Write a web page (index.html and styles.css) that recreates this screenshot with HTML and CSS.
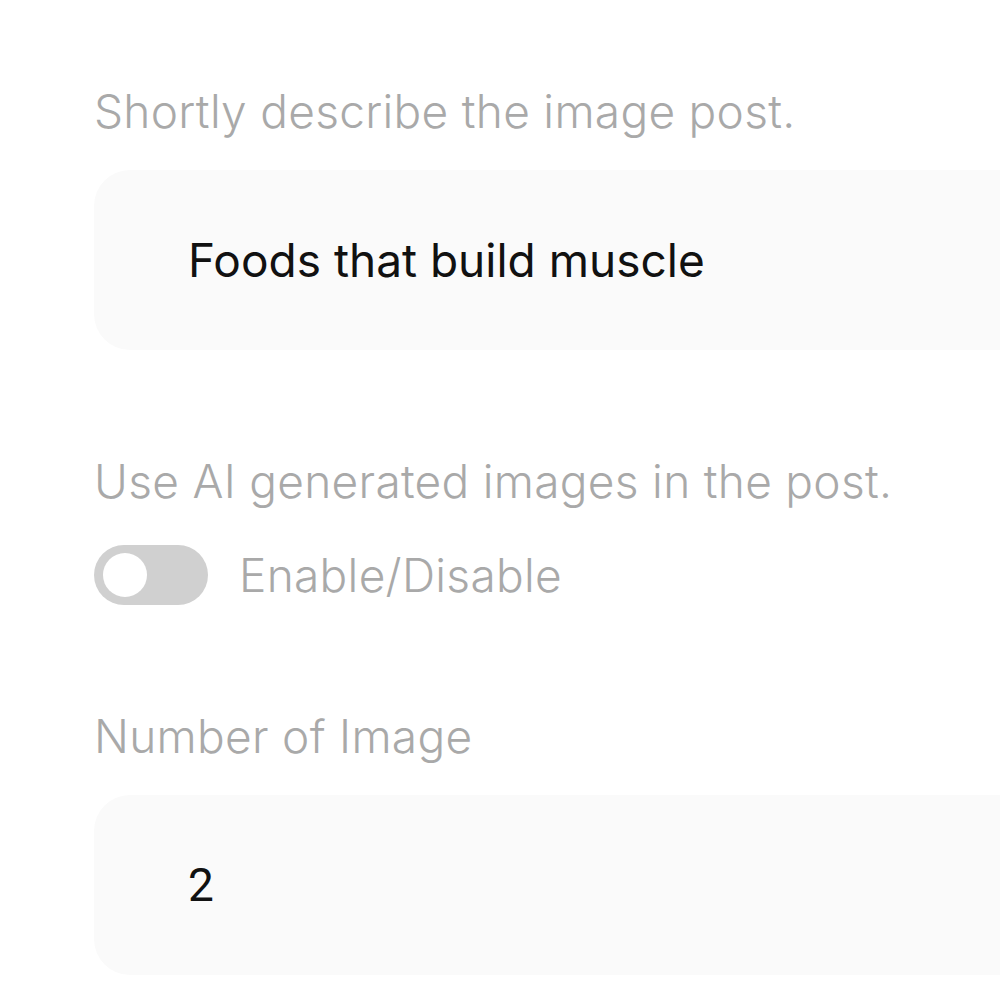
FILE: index.html
```html
<!DOCTYPE html>
<html lang="en">
<head>
    <meta charset="UTF-8">
    <meta name="viewport" content="width=device-width, initial-scale=1.0">
    <title>Image post settings</title>
    <link rel="stylesheet" href="styles.css">
</head>
<body>
    <main class="post-form">
        <div class="field">
            <label class="field-label" for="post-desc">Shortly describe the image post.</label>
            <div class="input-box" id="post-desc">Foods that build muscle</div>
        </div>

        <div class="field field-toggle">
            <span class="field-label">Use AI generated images in the post.</span>
            <div class="toggle-row">
                <span class="toggle"><span class="toggle-knob"></span></span>
                <span class="toggle-text">Enable/Disable</span>
            </div>
        </div>

        <div class="field">
            <label class="field-label" for="image-count">Number of Image</label>
            <div class="input-box input-number" id="image-count">2</div>
        </div>
    </main>
</body>
</html>
```

FILE: styles.css
```css
/* --- base --- */
:root {
    --label-color: #a9a9a9;
    --input-bg: #fafafa;
    --text-dark: #111;
    --font-family: Inter, "Noto Sans", Roboto, sans-serif;
}

body {
    margin: 0;
    background: #fff;
    font-family: var(--font-family);
    color: var(--text-dark);
}

.post-form {
    padding: 78px 0 0 94px;
    display: flex;
    flex-direction: column;
    gap: 98px;
}

.field {
    display: flex;
    flex-direction: column;
    gap: 26px;
}

.field-label {
    font-size: 46px;
    font-weight: 330;
    line-height: 66px;
    letter-spacing: 0.3px;
    color: var(--label-color);
}

/* --- inputs --- */
.input-box {
    height: 180px;
    margin-right: -40px;
    background: var(--input-bg);
    border-radius: 36px;
    display: flex;
    align-items: center;
    padding-left: 94px;
    font-size: 46px;
}

.input-number {
    font-family: Roboto, sans-serif;
}

/* --- toggle --- */
.field-toggle {
    gap: 31px;
}

.toggle-row {
    display: flex;
    align-items: center;
    gap: 31px;
}

.toggle {
    width: 114px;
    height: 60px;
    border-radius: 30px;
    background: #d0d0d0;
    display: flex;
    align-items: center;
    padding-left: 9px;
    box-sizing: border-box;
}

.toggle-knob {
    width: 44px;
    height: 44px;
    border-radius: 50%;
    background: #fff;
}

.toggle-text {
    font-size: 46px;
    font-weight: 330;
    letter-spacing: 0.3px;
    color: var(--label-color);
}
```
